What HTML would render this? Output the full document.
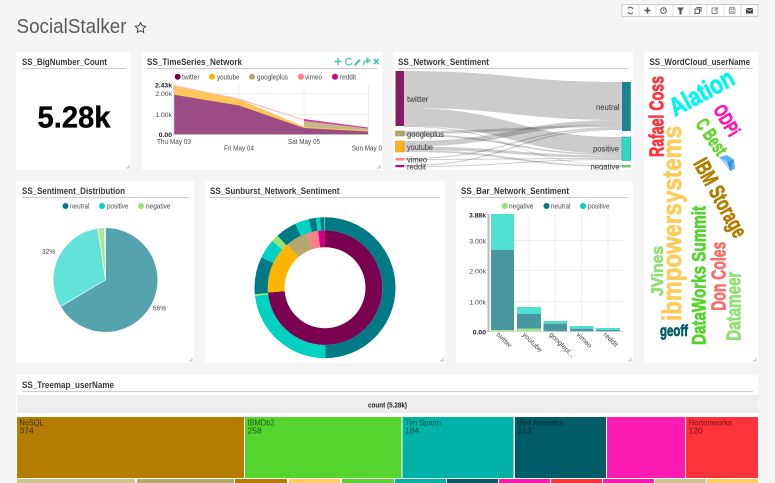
<!DOCTYPE html>
<html><head><meta charset="utf-8"><title>SocialStalker</title>
<style>
html,body{margin:0;padding:0;width:775px;height:483px;overflow:hidden;background:#f5f5f5}
svg{display:block;filter:blur(.3px)}
text{font-family:"Liberation Sans",sans-serif;fill:#484848;font-size:7px}
.t{font-weight:bold;font-size:9px;fill:#3a3a3a}
.w{font-family:"Liberation Sans Narrow","Liberation Sans",sans-serif;font-weight:bold;stroke-width:.7px;stroke-linejoin:round}
.b{font-weight:bold;fill:#222}
.m{font-size:8px;fill:#333}
.s{font-size:8.5px;fill:#444}
.y{font-size:6.800px}
</style></head><body>
<svg width="775" height="483" viewBox="0 0 775 483" xmlns="http://www.w3.org/2000/svg">
<rect width="775" height="483" fill="#f5f5f5"/>

<!-- header -->
<text x="16.500" y="33" style="font-size:20px;fill:#5a5a5a" textLength="110" lengthAdjust="spacingAndGlyphs">SocialStalker</text>
<path d="M140.500 22.500l1.600 3.300 3.600.5-2.600 2.500.6 3.600-3.200-1.700-3.200 1.700.6-3.600-2.600-2.500 3.600-.5z" fill="none" stroke="#444" stroke-width="1"/>

<!-- toolbar -->
<rect x="622" y="4.500" width="136" height="12" fill="#fff" stroke="#ccc" stroke-width="1" rx="1"/>
<g stroke="#ddd" stroke-width="1"><path d="M639 5v11M656 5v11M673 5v11M690 5v11M707 5v11M724 5v11M741 5v11"/></g>
<g fill="none" stroke="#555" stroke-width="1">
<path d="M633 9a2.800 2.800 0 0 0-5-.5M628 12a2.800 2.800 0 0 0 5 .5"/>
<path d="M647.500 7.500v6M644.500 10.500h6" stroke-width="1.600"/>
<circle cx="663.500" cy="10.500" r="2.800"/><path d="M663.500 9v1.700h1.300" stroke-width=".7"/>
<path d="M678 8h5l-2 2.500v3.500h-1v-3.500z" fill="#555"/>
<path d="M695 9h4.500v4.500h-4.500zM696.500 7.500h4.500v4.500" />
<path d="M712 8h5v5.500h-5zM714.500 11l3.500-3.500" stroke="#888"/>
<path d="M729.500 7.500h4.500l1 1v5h-5.500zM731 7.500v2h2.500v-2M731 11.500h2.500v2h-2.500z" stroke="#888" stroke-width=".8"/>
</g>
<rect x="746" y="8" width="7" height="5.500" fill="#444"/><path d="M746 8.500l3.500 2.500 3.500-2.500" stroke="#fff" stroke-width=".7" fill="none"/>

<!-- panels -->
<g fill="#fff">
<rect x="16" y="52" width="115" height="118"/>
<rect x="142" y="52" width="240" height="118"/>
<rect x="393" y="52" width="240" height="118"/>
<rect x="644" y="52" width="114" height="311"/>
<rect x="16" y="181" width="178" height="182"/>
<rect x="205" y="181" width="240" height="182"/>
<rect x="456" y="181" width="177" height="182"/>
<rect x="16" y="375" width="742" height="108"/>
</g>
<g stroke="#ccc" stroke-width="1">
<path d="M22 68.500h104M147 68.500h230M398 68.500h230M649 68.500h104M22 197.500h167M210 197.500h230M461 197.500h167M22 391.500h731"/>
</g>
<text class="t" x="22" y="65" textLength="85" lengthAdjust="spacingAndGlyphs">SS_BigNumber_Count</text>
<text class="t" x="147" y="65" textLength="95" lengthAdjust="spacingAndGlyphs">SS_TimeSeries_Network</text>
<text class="t" x="398" y="65" textLength="91" lengthAdjust="spacingAndGlyphs">SS_Network_Sentiment</text>
<text class="t" x="649.500" y="65" textLength="100.500" lengthAdjust="spacingAndGlyphs">SS_WordCloud_userName</text>
<text class="t" x="22" y="194" textLength="103" lengthAdjust="spacingAndGlyphs">SS_Sentiment_Distribution</text>
<text class="t" x="210" y="194" textLength="129.500" lengthAdjust="spacingAndGlyphs">SS_Sunburst_Network_Sentiment</text>
<text class="t" x="461" y="194" textLength="108" lengthAdjust="spacingAndGlyphs">SS_Bar_Network_Sentiment</text>
<text class="t" x="22" y="388" textLength="92" lengthAdjust="spacingAndGlyphs">SS_Treemap_userName</text>

<!-- resize handles -->
<g stroke="#aaa" stroke-width=".8" fill="none">
<path d="M129 165v3h-3M380 165v3h-3M756 358v3h-3M192 358v3h-3M443 358v3h-3M631 358v3h-3"/>
</g>

<!-- big number -->
<text x="37.500" y="127.500" style="font-size:31px;font-weight:bold;fill:#000;stroke:#000;stroke-width:.35px" textLength="73" lengthAdjust="spacingAndGlyphs">5.28k</text>

<!-- timeseries -->
<g fill="#4cc6b0" stroke="#4cc6b0">
<path d="M338 58v7M334.500 61.500h7" stroke-width="1.500" fill="none"/>
<path d="M351.500 59.800a3.300 3.300 0 1 0 .5 3" stroke-width="1.200" fill="none"/>
<path d="M354.500 64.500l4.500-5 1 1-4.500 5z" stroke-width=".8"/>
<path d="M363.500 65c0-3 1.500-4.500 4.500-4.500M367 58.500l3 2-3 2z" stroke-width="1.300" fill="none"/>
<path d="M374 59l4.500 5M378.500 59l-4.500 5" stroke-width="1.700" fill="none"/>
</g>
<g stroke="none">
<circle cx="177.700" cy="76.800" r="3" fill="#7a0050"/><circle cx="212" cy="76.800" r="3" fill="#ffb400"/><circle cx="252" cy="76.800" r="3" fill="#b5a76e"/><circle cx="301" cy="76.800" r="3" fill="#ff7f86"/><circle cx="335" cy="76.800" r="3" fill="#cc0088"/>
</g>
<text x="182" y="79.500" textLength="17.500" lengthAdjust="spacingAndGlyphs">twitter</text>
<text x="217" y="79.500" textLength="22.500" lengthAdjust="spacingAndGlyphs">youtube</text>
<text x="257" y="79.500" textLength="31" lengthAdjust="spacingAndGlyphs">googleplus</text>
<text x="305" y="79.500" textLength="17" lengthAdjust="spacingAndGlyphs">vimeo</text>
<text x="340" y="79.500" textLength="16" lengthAdjust="spacingAndGlyphs">reddit</text>
<g stroke="#eee" stroke-width="1"><path d="M239 85v49M304 85v49M368.500 85v49M174 93.500h195M174 114.500h195"/></g>
<path d="M174 85L239 98.500L304 119.500L304 134H174Z" fill="#ffb3b8" opacity=".9"/>
<path d="M174 86.500L239 100L304 120.500L304 134H174Z" fill="#fff"/>
<path d="M174 86L239 99.500L304 126.500L368 130.500V134H174Z" fill="#ffc75a"/>
<path d="M304 119L368 127.500V131L304 127Z" fill="#d9389f"/>
<path d="M304 121L368 128.500V131L304 127Z" fill="#c4b98c"/>
<path d="M304 127L368 130.500V132L304 128Z" fill="#ffc75a"/>
<path d="M174 94.700L239 105.500L304 128L368 131.500V134.500H174Z" fill="#9b4c85"/>
<path d="M174 85v49.500h195" fill="none" stroke="#bbb" stroke-width=".8"/>
<g text-anchor="end">
<text class="b y" x="172" y="87.500">2.43k</text>
<text class="y" x="172" y="96">2.00k</text>
<text class="y" x="172" y="117">1.00k</text>
<text class="b y" x="172" y="137">0.00</text>
</g>
<text x="157" y="144" textLength="34" lengthAdjust="spacingAndGlyphs">Thu May 03</text>
<text x="224" y="150.500" textLength="30" lengthAdjust="spacingAndGlyphs">Fri May 04</text>
<text x="288" y="144" textLength="32" lengthAdjust="spacingAndGlyphs">Sat May 05</text>
<text x="351.700" y="150.500" textLength="30.300" lengthAdjust="spacingAndGlyphs">Sun May 0</text>

<!-- sankey -->
<g fill="#000" fill-opacity=".2">
<path d="M404 71C513 71 513 82 622 82V120C513 120 513 108 404 108Z"/>
<path d="M404 108C513 108 513 137 622 137V154C513 154 513 126 404 126Z"/>
<path d="M404 126C513 126 513 165 622 165V165.500C513 165.500 513 127 404 127Z"/>
<path d="M404 131C513 131 513 125 622 125V127C513 127 513 134 404 134Z"/>
<path d="M404 134C513 134 513 154 622 154V155.500C513 155.500 513 136 404 136Z"/>
<path d="M404 141C513 141 513 120 622 120V125C513 125 513 146.500 404 146.500Z"/>
<path d="M404 146.500C513 146.500 513 155.500 622 155.500V158C513 158 513 150 404 150Z"/>
<path d="M404 150C513 150 513 165.500 622 165.500V167C513 167 513 152 404 152Z"/>
<path d="M404 158C513 158 513 127 622 127V128.500C513 128.500 513 159 404 159Z"/>
<path d="M404 159C513 159 513 158 622 158V159C513 159 513 160 404 160Z"/>
<path d="M404 165C513 165 513 128.500 622 128.500V130C513 130 513 166 404 166Z"/>
<path d="M404 166C513 166 513 159 622 159V160C513 160 513 167 404 167Z"/>
</g>
<rect x="395.500" y="71" width="8.500" height="55" fill="#861a63"/>
<rect x="395.500" y="131" width="8.500" height="5" fill="#b5a76e" stroke="#8c8050" stroke-width=".5"/>
<rect x="395.500" y="141" width="8.500" height="11" fill="#ffb41e" stroke="#c48c10" stroke-width=".5"/>
<rect x="395.500" y="158" width="8.500" height="2.500" fill="#ff7f86"/>
<rect x="395.500" y="165" width="8.500" height="2.200" fill="#cc0088"/>
<rect x="622" y="82" width="8.800" height="49" fill="#1a8290"/>
<rect x="622" y="137" width="8.800" height="23.500" fill="#2dd8c4" stroke="#1a9a8e" stroke-width=".5"/>
<rect x="622" y="165" width="8.800" height="2.500" fill="#7ecb6a"/>
<text class="m" x="407" y="102" textLength="21.500" lengthAdjust="spacingAndGlyphs">twitter</text>
<text class="m" x="407" y="136.800" textLength="37" lengthAdjust="spacingAndGlyphs">googleplus</text>
<text class="m" x="407" y="150" textLength="26" lengthAdjust="spacingAndGlyphs">youtube</text>
<text class="m" x="407" y="162.500" textLength="20" lengthAdjust="spacingAndGlyphs">vimeo</text>
<text class="m" x="407" y="169.500" textLength="19" lengthAdjust="spacingAndGlyphs">reddit</text>
<text class="m" x="596" y="110" textLength="23.500" lengthAdjust="spacingAndGlyphs">neutral</text>
<text class="m" x="593" y="151.500" textLength="26" lengthAdjust="spacingAndGlyphs">positive</text>
<text class="m" x="590.500" y="169.500" textLength="29" lengthAdjust="spacingAndGlyphs">negative</text>
<rect x="393" y="170" width="240" height="5" fill="#f5f5f5"/>

<!-- word cloud -->
<text class="w" transform="translate(663.500,157) rotate(-90)" style="font-size:20px;fill:#ff3339;stroke:#ff3339" textLength="81" lengthAdjust="spacingAndGlyphs">Rafael Coss</text>
<text class="w" transform="translate(675,117) rotate(-28.600)" style="font-size:26px;fill:#00f5f0;stroke:#00f5f0" textLength="70" lengthAdjust="spacingAndGlyphs">Alation</text>
<text class="w" transform="translate(712.700,109.500) rotate(59)" style="font-size:19px;fill:#ff1ab1;stroke:#ff1ab1" textLength="33" lengthAdjust="spacingAndGlyphs">ODPi</text>
<text class="w" transform="translate(695,124) rotate(55.600)" style="font-size:19px;fill:#66d42d;stroke:#66d42d" textLength="40" lengthAdjust="spacingAndGlyphs">C Best</text>
<g transform="translate(727,163) scale(1.150)"><path d="M-7 -5L0 -7L6 -3L7 5L3 7Z" fill="#5db4f2"/><path d="M-7 -5L0 -1L3 7Z" fill="#a5d8fa"/><path d="M0 -1L6 -3L3 7Z" fill="#3d94e0"/></g>
<text class="w" transform="translate(692.700,163.300) rotate(61)" style="font-size:22px;fill:#b37e00;stroke:#b37e00" textLength="87" lengthAdjust="spacingAndGlyphs">IBM Storage</text>
<text class="w" transform="translate(681,321) rotate(-90)" style="font-size:27px;fill:#ffcc5c;stroke:#ffcc5c" textLength="195" lengthAdjust="spacingAndGlyphs">ibmpowersystems</text>
<text class="w" transform="translate(663,296) rotate(-90)" style="font-size:17px;fill:#90e074;stroke:#90e074" textLength="50" lengthAdjust="spacingAndGlyphs">JVines</text>
<text class="w" transform="translate(705.500,345) rotate(-90)" style="font-size:19px;fill:#55d42d;stroke:#55d42d" textLength="139" lengthAdjust="spacingAndGlyphs">DataWorks Summit</text>
<text class="w" transform="translate(725.500,310.700) rotate(-90)" style="font-size:20px;fill:#ff6b6b;stroke:#ff6b6b" textLength="69" lengthAdjust="spacingAndGlyphs">Don Coles</text>
<text class="w" transform="translate(740.500,340.700) rotate(-90)" style="font-size:20px;fill:#90e074;stroke:#90e074" textLength="69" lengthAdjust="spacingAndGlyphs">Datameer</text>
<text class="w" x="660" y="336" style="font-size:16px;fill:#005c66;stroke:#005c66" textLength="28" lengthAdjust="spacingAndGlyphs">geoff</text>

<!-- pie -->
<circle cx="65.500" cy="206" r="3" fill="#007a87"/><circle cx="102" cy="206" r="3" fill="#00d1c1"/><circle cx="141" cy="206" r="3" fill="#8fe574"/>
<text x="70" y="208.500" textLength="19.500" lengthAdjust="spacingAndGlyphs">neutral</text>
<text x="107" y="208.500" textLength="21.500" lengthAdjust="spacingAndGlyphs">positive</text>
<text x="146" y="208.500" textLength="24.500" lengthAdjust="spacingAndGlyphs">negative</text>
<g transform="rotate(-90 105.500 280)" fill="none" stroke-width="52">
<circle cx="105.500" cy="280" r="26" pathLength="360" stroke="#55a3ad" stroke-dasharray="240 360"/>
<circle cx="105.500" cy="280" r="26" pathLength="360" stroke="#62e2d8" stroke-dasharray="112 360" stroke-dashoffset="-240"/>
<circle cx="105.500" cy="280" r="26" pathLength="360" stroke="#a9e89a" stroke-dasharray="8 360" stroke-dashoffset="-352"/>
</g>
<path d="M105.500 280L61 306M105.500 280L105.500 228M105.500 280L98.300 228.500" stroke="#fff" stroke-width=".6"/>
<text x="42" y="254" textLength="13" lengthAdjust="spacingAndGlyphs">32%</text>
<text x="153" y="310.500" textLength="13" lengthAdjust="spacingAndGlyphs">66%</text>

<!-- sunburst -->
<g transform="rotate(-90 325 287.700)" fill="none">
<g stroke-width="16.800">
<circle cx="325" cy="287.700" r="48.900" pathLength="360" stroke="#7a0050" stroke-dasharray="265 360"/>
<circle cx="325" cy="287.700" r="48.900" pathLength="360" stroke="#ffb400" stroke-dasharray="54 360" stroke-dashoffset="-265"/>
<circle cx="325" cy="287.700" r="48.900" pathLength="360" stroke="#b5a76e" stroke-dasharray="23 360" stroke-dashoffset="-319"/>
<circle cx="325" cy="287.700" r="48.900" pathLength="360" stroke="#ff7f86" stroke-dasharray="11 360" stroke-dashoffset="-342"/>
<circle cx="325" cy="287.700" r="48.900" pathLength="360" stroke="#cc0088" stroke-dasharray="7 360" stroke-dashoffset="-353"/>
</g>
<g stroke-width="13.200">
<circle cx="325" cy="287.700" r="63.900" pathLength="360" stroke="#007a87" stroke-dasharray="180 360"/>
<circle cx="325" cy="287.700" r="63.900" pathLength="360" stroke="#00d1c1" stroke-dasharray="83.500 360" stroke-dashoffset="-180"/>
<circle cx="325" cy="287.700" r="63.900" pathLength="360" stroke="#8fe574" stroke-dasharray="1.500 360" stroke-dashoffset="-263.500"/>
<circle cx="325" cy="287.700" r="63.900" pathLength="360" stroke="#007a87" stroke-dasharray="31 360" stroke-dashoffset="-265"/>
<circle cx="325" cy="287.700" r="63.900" pathLength="360" stroke="#00d1c1" stroke-dasharray="16 360" stroke-dashoffset="-296"/>
<circle cx="325" cy="287.700" r="63.900" pathLength="360" stroke="#8fe574" stroke-dasharray="6 360" stroke-dashoffset="-312"/>
<circle cx="325" cy="287.700" r="63.900" pathLength="360" stroke="#007a87" stroke-dasharray="17.500 360" stroke-dashoffset="-318"/>
<circle cx="325" cy="287.700" r="63.900" pathLength="360" stroke="#00d1c1" stroke-dasharray="11.500 360" stroke-dashoffset="-335.500"/>
<circle cx="325" cy="287.700" r="63.900" pathLength="360" stroke="#007a87" stroke-dasharray="6 360" stroke-dashoffset="-347"/>
<circle cx="325" cy="287.700" r="63.900" pathLength="360" stroke="#00d1c1" stroke-dasharray="3.500 360" stroke-dashoffset="-353"/>
<circle cx="325" cy="287.700" r="63.900" pathLength="360" stroke="#007a87" stroke-dasharray="3.500 360" stroke-dashoffset="-356.500"/>
</g>
</g>

<!-- bars -->
<circle cx="504.700" cy="206" r="3" fill="#8fe574"/><circle cx="546.500" cy="206" r="3" fill="#007a87"/><circle cx="583" cy="206" r="3" fill="#00d1c1"/>
<text x="509" y="208.500" textLength="24.500" lengthAdjust="spacingAndGlyphs">negative</text>
<text x="551" y="208.500" textLength="19.500" lengthAdjust="spacingAndGlyphs">neutral</text>
<text x="588" y="208.500" textLength="21.500" lengthAdjust="spacingAndGlyphs">positive</text>
<g stroke="#eee" stroke-width="1"><path d="M502.500 214v117M529 214v117M555 214v117M581.500 214v117M608 214v117M489 240.500h134M489 270.500h134M489 301.500h134"/></g>
<rect x="487.500" y="214" width="2" height="118" fill="#bbb"/>
<path d="M489 331.500h134" stroke="#ddd"/>
<g>
<rect x="491" y="214" width="23" height="36" fill="#4fe0d2"/><rect x="491" y="250" width="23" height="80" fill="#47979f"/><rect x="491" y="330" width="23" height="1.300" fill="#9de885"/>
<rect x="517" y="307" width="24" height="7" fill="#4fe0d2"/><rect x="517" y="314" width="24" height="14.700" fill="#47979f"/><rect x="517" y="328.700" width="24" height="2.500" fill="#9de885"/>
<rect x="543.500" y="321" width="23.500" height="2.700" fill="#4fe0d2"/><rect x="543.500" y="323.700" width="23.500" height="7.500" fill="#47979f"/>
<rect x="570" y="326" width="23.500" height="2.700" fill="#4fe0d2"/><rect x="570" y="328.700" width="23.500" height="2.500" fill="#47979f"/>
<rect x="596" y="328" width="24" height="2" fill="#4fe0d2"/><rect x="596" y="330" width="24" height="1.200" fill="#47979f"/>
</g>
<g text-anchor="end">
<text class="b y" x="486" y="217.500">3.88k</text>
<text class="y" x="486" y="243.500">3.00k</text>
<text class="y" x="486" y="273.500">2.00k</text>
<text class="y" x="486" y="304.500">1.00k</text>
<text class="b y" x="486" y="334.500">0.00</text>
</g>
<text transform="translate(496,335) rotate(45)">twitter</text>
<text transform="translate(522,335) rotate(45)">youtube</text>
<text transform="translate(549,335) rotate(45)">googlepl...</text>
<text transform="translate(576,335) rotate(45)">vimeo</text>
<text transform="translate(603,335) rotate(45)">reddit</text>

<!-- treemap -->
<rect x="17" y="395" width="741" height="18" fill="#eee"/>
<text class="b" x="368" y="407.500" textLength="39" lengthAdjust="spacingAndGlyphs">count (5.28k)</text>
<rect x="17" y="417" width="227" height="61" fill="#b37e00"/>
<rect x="245" y="417" width="156.500" height="61" fill="#55d42d"/>
<rect x="402.500" y="417" width="111" height="61" fill="#00b3a6"/>
<rect x="515" y="417" width="91" height="61" fill="#005c66"/>
<rect x="607" y="417" width="78" height="61" fill="#ff1ab1"/>
<rect x="686" y="417" width="72" height="61" fill="#ff3339"/>
<rect x="17" y="479" width="118" height="4" fill="#ccc38f"/>
<rect x="137" y="479" width="97" height="4" fill="#b5a76e"/>
<rect x="235" y="479" width="52" height="4" fill="#b37e00"/>
<rect x="289" y="479" width="51" height="4" fill="#ffcc5c"/>
<rect x="342" y="479" width="52" height="4" fill="#55d42d"/>
<rect x="395" y="479" width="51" height="4" fill="#00b3a6"/>
<rect x="447" y="479" width="51" height="4" fill="#005c66"/>
<rect x="499" y="479" width="51" height="4" fill="#ff1ab1"/>
<rect x="551" y="479" width="51" height="4" fill="#ff3339"/>
<rect x="603" y="479" width="51" height="4" fill="#ff1ab1"/>
<rect x="655" y="479" width="51" height="4" fill="#ccc38f"/>
<rect x="707" y="479" width="51" height="4" fill="#ffcc5c"/>
<text class="s" x="19.500" y="425.500" style="fill:#3a2a00" textLength="24" lengthAdjust="spacingAndGlyphs">NoSQL</text>
<text class="s" x="19.500" y="433.500" style="fill:#3a2a00">374</text>
<text class="s" x="247.500" y="425.500" style="fill:#1a5a10" textLength="27" lengthAdjust="spacingAndGlyphs">IBMDb2</text>
<text class="s" x="247.500" y="433.500" style="fill:#1a5a10">258</text>
<text class="s" x="405" y="425.500" style="fill:#04504a" textLength="36" lengthAdjust="spacingAndGlyphs">Tim Spann</text>
<text class="s" x="405" y="433.500" style="fill:#04504a">184</text>
<text class="s" x="517.500" y="425.500" style="fill:#002a2f" textLength="46" lengthAdjust="spacingAndGlyphs">IBM Analytics</text>
<text class="s" x="517.500" y="433.500" style="fill:#002a2f">152</text>
<text class="s" x="688.500" y="425.500" style="fill:#701418" textLength="43.500" lengthAdjust="spacingAndGlyphs">Hortonworks</text>
<text class="s" x="688.500" y="433.500" style="fill:#701418">120</text>
</svg>
</body></html>
